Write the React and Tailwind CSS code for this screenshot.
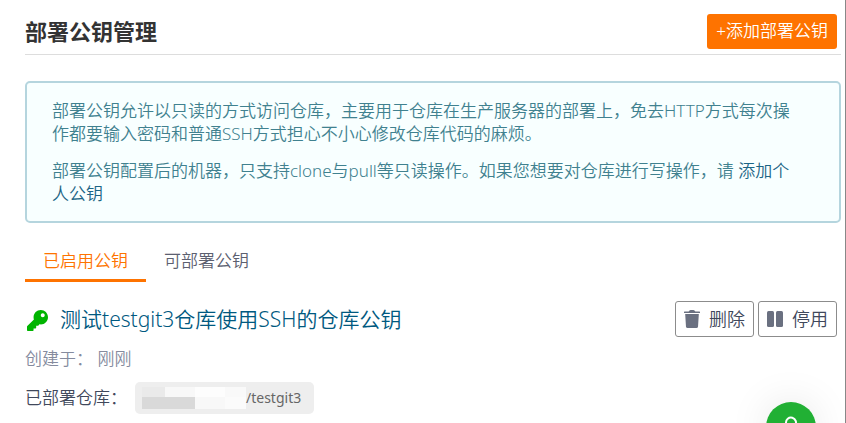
import { FaKey } from 'react-icons/fa';

const tabs = [
  { id: 'enabled', label: '已启用公钥', active: true },
  { id: 'available', label: '可部署公钥', active: false },
];

function TrashIcon() {
  return (
    <svg viewBox="0 0 16 18" className="h-[18px] w-4 fill-current" aria-hidden="true">
      <path d="M0.5 1.5 H4.6 Q5.4 0 6.6 0 H9.4 Q10.6 0 11.4 1.5 H15.5 Q16 1.5 16 2 V3 H0 V2 Q0 1.5 0.5 1.5 Z" />
      <path d="M1.2 4 H14.8 L14 16.5 Q13.9 18 12.4 18 H3.6 Q2.1 18 2 16.5 Z" />
    </svg>
  );
}

function PauseIcon() {
  return (
    <svg viewBox="0 0 16 16" className="size-4 fill-current" aria-hidden="true">
      <rect x="0" y="0" width="7" height="16" rx="1.5" />
      <rect x="9" y="0" width="7" height="16" rx="1.5" />
    </svg>
  );
}

function ActionButton({ icon, children }) {
  return (
    <button type="button" className="flex h-9 items-center gap-[9px] rounded-[3px] border border-[#8c8c8c] bg-white px-2 text-[18px] text-[#40485b]">
      <span className="text-[#6a7080]">{icon}</span>
      {children}
    </button>
  );
}

export default function App() {
  return (
    <div className="h-screen overflow-hidden border-r border-[#888] bg-white pl-[25px] pr-1 font-['Noto_Sans','Noto_Sans_CJK_SC',sans-serif] text-[17px] font-[350] leading-6 text-[#40485b]">
      <header className="flex h-[55px] items-center justify-between border-b border-[#ddd] pr-1 pt-2">
        <h1 className="text-[22px] font-bold leading-8 text-[#333]">部署公钥管理</h1>
        <button type="button" className="h-[35px] rounded-[3px] bg-[#fe7300] px-[9px] text-white">
          +添加部署公钥
        </button>
      </header>

      <section className="mt-[26px] rounded-[5px] border-2 border-[#b5d5de] bg-[#f8ffff] py-4 pl-[25px] pr-10 text-[#40818f]">
        <p className="leading-[23px]">
          部署公钥允许以只读的方式访问仓库，主要用于仓库在生产服务器的部署上，免去HTTP方式每次操作都要输入密码和普通SSH方式担心不小心修改仓库代码的麻烦。
        </p>
        <p className="mt-[14px] leading-[23px]">
          部署公钥配置后的机器，只支持clone与pull等只读操作。如果您想要对仓库进行写操作，请{' '}
          <a href="#personal" className="text-[#1c6586]">
            添加个人公钥
          </a>
        </p>
      </section>

      <nav className="mt-[18px] flex">
        {tabs.map((tab) => (
          <a
            key={tab.id}
            href={`#${tab.id}`}
            className={
              tab.active
                ? 'border-b-[3px] border-[#fe7300] px-[18px] pb-[6px] pt-2 text-[#fe7300]'
                : 'border-b-[3px] border-transparent px-[18px] pb-[6px] pt-2 text-[#5c6070]'
            }
          >
            {tab.label}
          </a>
        ))}
      </nav>

      <article className="mt-[19px]">
        <div className="flex items-center justify-between pr-1">
          <h2 className="flex items-center gap-3 text-[21px] leading-8">
            <svg viewBox="0 0 23 24" className="h-6 w-[23px] text-[#00b400]" aria-hidden="true">
              <FaKey x="2" y="3" width="21" height="21" />
            </svg>
            <a href="#key" className="text-[#005980]">
              测试testgit3仓库使用SSH的仓库公钥
            </a>
          </h2>
          <div className="flex gap-1">
            <ActionButton icon={<TrashIcon />}>删除</ActionButton>
            <ActionButton icon={<PauseIcon />}>停用</ActionButton>
          </div>
        </div>
        <p className="mt-[10px] text-[#858b9e]">创建于： 刚刚</p>
        <div className="mt-[11px] flex items-center gap-2">
          <span>已部署仓库：</span>
          <a href="#repo" className="flex h-8 items-center rounded-[5px] bg-[#eee] pl-[7px] pr-[13px] text-[14px] font-normal text-[#666]">
            <span className="grid h-[22px] w-[104px] grid-cols-[23px_30px_30px_21px] grid-rows-[10px_12px]">
              <span className="bg-[#eaeaea]" />
              <span className="bg-[#f8f8f8]" />
              <span className="bg-[#fdfdfd]" />
              <span className="bg-[#f9f9f9]" />
              <span className="col-span-2 bg-[#d9d9d9]" />
              <span className="bg-[#f8f8f8]" />
              <span className="bg-[#fbfbfb]" />
            </span>
            /testgit3
          </a>
        </div>
      </article>

      <button type="button" aria-label="帮助" className="fixed -bottom-[29px] right-[30px] flex size-[50px] justify-center rounded-full bg-[#21b034] pt-[14px] text-white shadow-[0_0_40px_rgba(0,0,0,0.1)]">
        <svg viewBox="0 0 20 24" className="h-6 w-5 fill-none stroke-current stroke-2" aria-hidden="true">
          <path d="M5 7 A5 5 0 1 1 14 9.500 Q10 12 10 15 M10 19 V21" />
        </svg>
      </button>
    </div>
  );
}
